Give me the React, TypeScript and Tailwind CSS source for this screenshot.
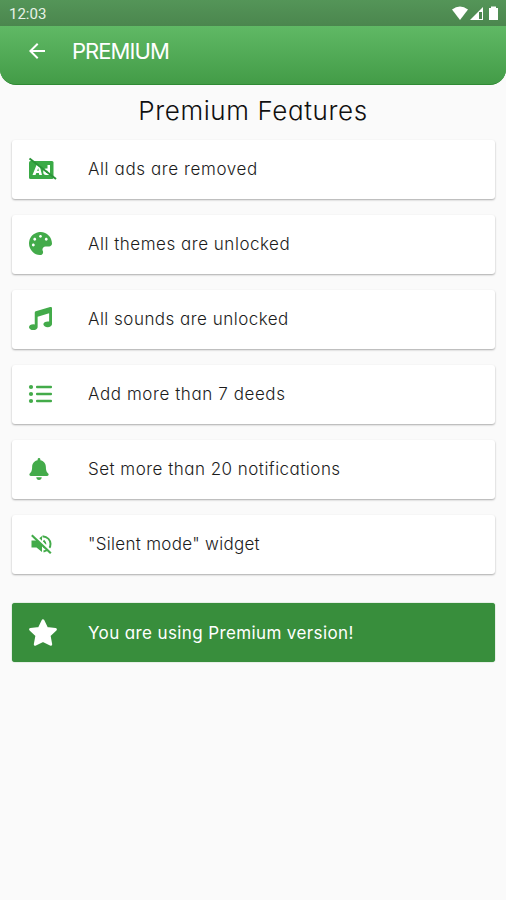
import type { ReactNode } from "react";
import { FaBell, FaMusic, FaPalette } from "react-icons/fa";
import { MdArrowBack } from "react-icons/md";

const AdsOffIcon = () => (
  <svg width="29" height="24" viewBox="0 0 29 24" className="text-[#3aaa46]">
    <rect x="1" y="4" width="24.500" height="18" rx="1.500" fill="currentColor" />
    <path d="M4.500 18 8.500 8h3l2.500 10h-2.700l-.5-2H8.300l-.8 2zM9.200 14h1.600l-.6-3z" fill="white" />
    <path d="M22 8v10h-4q-2.800 0-2.800-3.200t2.800-3.200h1.500V8zM18 13.800v2.200h1.500v-2.200z" fill="white" />
    <path d="M1.500 1.500 28 22" stroke="#2b9438" strokeWidth="2" />
  </svg>
);

const ListIcon = () => (
  <svg width="24" height="20" viewBox="0 0 24 20" fill="currentColor">
    <circle cx="3" cy="3" r="2.100" />
    <circle cx="3" cy="10" r="2.100" />
    <circle cx="3" cy="17" r="2.100" />
    <rect x="8" y="1.700" width="16" height="2.600" rx="1" />
    <rect x="8" y="8.700" width="16" height="2.600" rx="1" />
    <rect x="8" y="15.700" width="16" height="2.600" rx="1" />
  </svg>
);

const SoundOffIcon = () => (
  <svg width="21" height="20" viewBox="0 0 21 20" fill="none" stroke="currentColor">
    <path d="M.5 6.500h5L11 2v16l-5.500-4.500h-5z" fill="currentColor" stroke="none" />
    <path d="M12.500 6.500q3.500 3.500 0 7" strokeWidth="2" />
    <path d="M11.500 2.200C22 3.500 22 16 12.500 17.500" strokeWidth="2" />
    <path d="M2 0 21 18" stroke="white" strokeWidth="2.500" />
    <path d="M.8 1.200 19.800 19.200" strokeWidth="2.200" />
  </svg>
);

const StarIcon = () => (
  <svg width="30" height="30" viewBox="0 0 30 30" fill="white" stroke="white" strokeWidth="3" strokeLinejoin="round">
    <path d="M15 2.800 18.600 10.400 27.400 11.400 21 17.400 22.700 26.200 15 22.300 7.300 26.200 9 17.400 2.600 11.400 11.400 10.400z" />
  </svg>
);

const features: { label: string; icon: ReactNode; tracking: string }[] = [
  { label: "All ads are removed", icon: <AdsOffIcon />, tracking: "tracking-[0.6px]" },
  { label: "All themes are unlocked", icon: <FaPalette size={23} className="ml-px" />, tracking: "tracking-[0.52px]" },
  { label: "All sounds are unlocked", icon: <FaMusic size={23} className="ml-px" />, tracking: "tracking-[0.48px]" },
  { label: "Add more than 7 deeds", icon: <ListIcon />, tracking: "tracking-[0.58px]" },
  { label: "Set more than 20 notifications", icon: <FaBell size={22} />, tracking: "tracking-[0.48px]" },
  { label: '"Silent mode" widget', icon: <div className="pl-[3px]"><SoundOffIcon /></div>, tracking: "tracking-[0.29px]" },
];

const StatusBar = () => (
  <div className="flex h-[26px] items-center justify-between bg-linear-to-b from-[#549558] to-[#4b864e] pl-[9px] pr-[7px]">
    <span className="pt-[3px] font-[Roboto] text-[15px] leading-none text-[#e7f2e7]">12:03</span>
    <svg width="47" height="15" viewBox="0 0 47 15" fill="white">
      <path d="M0 3.500Q8-2.500 16 3.500L8 14z" />
      <path d="M31 1v13H18z" />
      <path d="M27 6h3v7h-3z" fill="#4d8750" />
      <path d="M37 2h2V.5h5V2h2v12h-9z" />
    </svg>
  </div>
);

const Header = () => (
  <header className="h-[85px] overflow-hidden rounded-b-2xl border-b border-[#2f8a34] bg-[#439d48] text-white">
    <StatusBar />
    <div className="flex h-[58px] items-center bg-linear-to-b from-[#60b965] to-[#439c47] pb-2 pl-[25px]">
      <MdArrowBack size={24} />
      <span className="ml-[23px] text-[22px] leading-none tracking-[-0.95px]">PREMIUM</span>
    </div>
  </header>
);

export default function App() {
  return (
    <div className="h-[900px] w-[506px] bg-[#fafafa] font-['Inter','Open_Sans',sans-serif] [font-feature-settings:'cv11']">
      <Header />
      <main className="px-[11px] pt-2">
        <h1 className="pb-[11px] text-center text-[26px] leading-9 font-light tracking-[0.6px] text-[#101010]">
          Premium Features
        </h1>
        <ul className="flex flex-col gap-4 pl-px">
          {features.map(({ label, icon, tracking }) => (
            <li
              key={label}
              className="flex h-[59px] items-center rounded-[3px] bg-white pb-0.5 pl-4 text-[#43ab4a] shadow-[0_1px_2px_rgba(0,0,0,0.32)]"
            >
              <div className="w-[60px]">{icon}</div>
              <span className={`pt-[3px] text-[17px] font-light text-[#1c1c1c] ${tracking}`}>{label}</span>
            </li>
          ))}
        </ul>
        <div className="mt-[29px] ml-px flex h-[59px] items-center rounded-[3px] bg-[#388e3c] pl-4 text-white shadow-[0_0_1px_#388e3c]">
          <div className="w-[60px]">
            <StarIcon />
          </div>
          <span className="pt-0.5 text-[17px] tracking-[0.38px]">You are using Premium version!</span>
        </div>
      </main>
    </div>
  );
}
